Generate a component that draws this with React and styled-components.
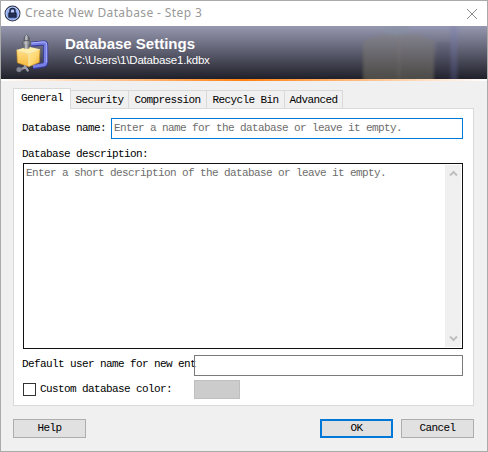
import React from 'react';
import styled, { createGlobalStyle } from 'styled-components';

const GlobalStyle = createGlobalStyle`
  * { box-sizing: border-box; }
  body { margin: 0; overflow: hidden; }
  button, input, textarea { font: inherit; letter-spacing: inherit; border-radius: 0; margin: 0; }
`;

const Window = styled.div`
  width: 488px;
  height: 452px;
  border: 1px solid #aaaaaa;
  background: #f0f0f0;
  display: flex;
  flex-direction: column;
  color: #000;
  font: 11px/14px "Liberation Mono", monospace;
  letter-spacing: -0.6px;
`;

const TitleBar = styled.header`
  height: 25px;
  flex: none;
  background: #fff;
  display: flex;
  align-items: center;
  padding: 0 9px 0 3px;
`;

const Title = styled.h1`
  flex: 1;
  margin: -2px 0 0 4px;
  font: 400 12px/20px "Noto Sans", sans-serif;
  letter-spacing: 0.38px;
  color: #999;
`;

const CloseButton = styled.button`
  width: 12px;
  height: 12px;
  padding: 0;
  border: 0;
  background: none;
  display: flex;
`;

const Banner = styled.section`
  height: 53px;
  flex: none;
  display: flex;
  overflow: hidden;
  background: linear-gradient(#9698b0, #20202a);
`;

const BannerIcon = styled.div`
  width: 64px;
  padding: 7px 0 0 13px;
`;

const BannerText = styled.div`
  flex: 1;
  color: #fff;
  font-family: "Liberation Sans", sans-serif;
  white-space: nowrap;
`;

const Heading = styled.h2`
  margin: 9px 0 0;
  font-size: 15px;
  line-height: 18px;
  font-weight: 700;
  letter-spacing: 0;
`;

const Path = styled.p`
  margin: 0 0 0 9px;
  font-size: 11.5px;
  line-height: 15px;
  letter-spacing: -0.2px;
`;

const Watermark = styled.div`
  width: 132px;
  height: 53px;
`;

const AccentLine = styled.div`
  height: 2px;
  flex: none;
  background: linear-gradient(90deg, #fff, #ff8010 50%, #fff);
`;

const Content = styled.main`
  flex: 1;
  padding: 7px 13px 0 12px;
`;

const TabList = styled.div`
  height: 20px;
  display: flex;
  align-items: flex-end;
`;

const Tab = styled.button`
  width: ${(p) => p.$width}px;
  height: ${(p) => (p.$active ? 21 : 18)}px;
  margin-bottom: ${(p) => (p.$active ? -1 : 0)}px;
  position: relative;
  padding: ${(p) => (p.$active ? '0 0 2px' : '1px 0 0')};
  border: 1px solid #d9d9d9;
  border-bottom: 0;
  border-left-width: ${(p) => (p.$active ? 1 : 0)}px;
  background: ${(p) => (p.$active ? '#fff' : '#f0f0f0')};
  color: #000;
  white-space: nowrap;
`;

const Panel = styled.section`
  height: 298px;
  border: 1px solid #d9d9d9;
  background: #fff;
  padding: 9px 10px 0 8px;
`;

const Row = styled.div`
  display: flex;
  align-items: center;
  height: ${(p) => p.$height}px;
  margin-top: ${(p) => p.$gap || 0}px;
`;

const Label = styled.label`
  width: ${(p) => p.$width}px;
  height: 14px;
  flex: none;
  margin-top: ${(p) => -(p.$lift || 0)}px;
  padding-left: ${(p) => p.$inset || 0}px;
  white-space: nowrap;
`;

const TextField = styled.input`
  flex: 1;
  min-width: 0;
  height: 21px;
  padding: 0 2px 1px;
  border: 1px solid ${(p) => (p.$focused ? '#0078d7' : '#7a7a7a')};
  background: ${(p) => (p.$focused ? '#fff' : 'transparent')};
  outline: none;
  &::placeholder { color: #6d6d6d; opacity: 1; }
`;

const DescriptionBox = styled.div`
  display: flex;
  height: 186px;
  margin: 2px 0 0 1px;
  border: 1px solid #111;
  padding: 1px;
`;

const DescriptionArea = styled.textarea`
  flex: 1;
  padding: 1px;
  border: 0;
  resize: none;
  outline: none;
  background: #fff;
  overflow: hidden;
  &::placeholder { color: #6d6d6d; opacity: 1; }
`;

const ScrollBar = styled.div`
  width: 16px;
  background: #f0f0f0;
  display: flex;
  flex-direction: column;
  justify-content: space-between;
`;

const ScrollButton = styled.button`
  width: 16px;
  height: 17px;
  padding: 0;
  border: 0;
  background: #f0f0f0;
  display: flex;
  align-items: center;
  justify-content: center;
`;

const CheckBox = styled.input`
  && { margin-left: 1px; }
  appearance: none;
  width: 13px;
  height: 13px;
  flex: none;
  border: 1px solid #333;
  background: #fff;
`;

const ColorButton = styled.button`
  width: 46px;
  height: 19px;
  padding: 0;
  border: 1px solid #bfbfbf;
  background: #ccc;
`;

const Footer = styled.footer`
  display: flex;
  gap: 8px;
  margin-top: 13px;
`;

const Button = styled.button`
  width: 73px;
  height: 19px;
  padding: 0 0 1px;
  border: ${(p) => (p.$primary ? '2px solid #0078d7' : '1px solid #adadad')};
  background: #e1e1e1;
  color: #000;
  line-height: 12px;
  &:first-child { margin-right: auto; }
`;

const LockIcon = () => (
  <svg width="17" height="17" viewBox="0 0 17 17">
    <defs>
      <radialGradient id="lockFill" cx=".5" cy=".4" r=".65">
        <stop offset="0" stopColor="#c2d2ff" />
        <stop offset=".6" stopColor="#88a6f0" />
        <stop offset="1" stopColor="#5677cc" />
      </radialGradient>
    </defs>
    <circle cx="8.5" cy="8.5" r="7.4" fill="url(#lockFill)" stroke="#2c3346" strokeWidth="1.1" />
    <circle cx="8.5" cy="8.5" r="6.5" fill="none" stroke="#d5e0ff" strokeWidth=".7" />
    <path d="M6 8V6a2.5 2.5 0 0 1 5 0v2" fill="none" stroke="#1c2746" strokeWidth="1.5" />
    <rect x="4.3" y="7.5" width="8.4" height="5.2" rx=".6" fill="#17213f" />
    <path d="M5.5 9.2h6M5.5 11h6" stroke="#40517c" strokeWidth=".6" />
  </svg>
);

const PackageIcon = () => (
  <svg width="40" height="42" viewBox="0 0 40 42">
    <defs>
      <linearGradient id="goldSide" x2="0" y2="1">
        <stop stopColor="#ffe08a" />
        <stop offset="1" stopColor="#f7b93c" />
      </linearGradient>
      <linearGradient id="goldFront" x2="1" y2="1">
        <stop stopColor="#ffe48e" />
        <stop offset=".5" stopColor="#ffd873" />
        <stop offset="1" stopColor="#efaa2c" />
      </linearGradient>
      <linearGradient id="steel">
        <stop stopColor="#56585d" />
        <stop offset=".4" stopColor="#c9ccd0" />
        <stop offset="1" stopColor="#515359" />
      </linearGradient>
    </defs>
    <path d="M17 11.2 29.5 10q2.2 0 2.2 2.2v17.6q0 2-2.2 2.3L19 34" fill="none" stroke="#34389a" strokeWidth="5" strokeLinejoin="round" />
    <path d="M17 11 29.5 9.8q2 0 2 2.2v17.6q0 2-2.2 2.3L19 33.5" fill="none" stroke="#7980e4" strokeWidth="3.2" />
    <path d="M17 10 30 8.8q2.8 0 2.8 2.8v18" fill="none" stroke="#b5baff" strokeWidth=".9" />
    <path d="M10 7.5q-.6-4.6 2.6-6 3.2 1.4 2.6 6z" fill="url(#steel)" stroke="#4c4e54" strokeWidth=".6" />
    <path d="M8.6 8.4q4-1.3 8 0l.3 3.2q-4.3 1.4-8.6 0z" fill="url(#steel)" stroke="#5c5e63" strokeWidth=".5" />
    <path d="M2.7 17 13.7 13.5 26 16.2 14.8 20.4z" fill="#ffefac" />
    <path d="m9.7 11.5h5.8v3.7q-2.9 1.2-5.8 0z" fill="url(#steel)" />
    <path d="M2.7 17 14.8 20.4v13.3L3.4 29.8z" fill="url(#goldSide)" />
    <path d="M14.8 20.4 26 16.2l-.7 13.3-10.5 4.2z" fill="url(#goldFront)" />
    <path d="M2.7 17 14.8 20.4 26 16.2M14.8 20.4v13" fill="none" stroke="#fff5c2" strokeWidth=".8" />
    <path d="m2.7 17 .7 12.8 11.4 3.9 10.5-4.2.7-13.3" fill="none" stroke="#c58a24" strokeWidth=".6" />
    <path d="m6 36.5 5.5-2.3M10.8 33.2l3 4.3" stroke="#9a9ca9" strokeWidth="2.2" strokeLinecap="round" />
    <circle cx="5" cy="36.5" r="2.6" fill="#858795" stroke="#5b5d6b" strokeWidth=".5" />
  </svg>
);

const WatermarkArt = () => (
  <svg width="132" height="53" viewBox="-10 0 132 53">
    <defs>
      <filter id="soften" filterUnits="userSpaceOnUse" x="-10" y="-20" width="142" height="110" colorInterpolationFilters="sRGB">
        <feGaussianBlur stdDeviation="1.6" />
      </filter>
      <linearGradient id="boxShade" x2="0" y2="1">
        <stop stopColor="#83807f" stopOpacity=".45" />
        <stop offset="1" stopColor="#6b6752" stopOpacity=".6" />
      </linearGradient>
    </defs>
    <g filter="url(#soften)">
      <path d="M72 16h14v52H72z" fill="#343350" opacity=".12" />
      <path d="M-2 15 17 8h35l17 7v53H-2z" fill="url(#boxShade)" />
      <path d="M34 14v54" stroke="#a38d86" strokeWidth="2" opacity=".15" />
      <path d="M18-10h27l-3 18-10 2-12-2z" fill="#8295a4" opacity=".3" />
      <path d="M42-10h42V3H46z" fill="#9294cc" opacity=".2" />
      <path d="M89-14v82" fill="none" stroke="#7476b8" strokeWidth="7" opacity=".27" />
    </g>
  </svg>
);

const Chevron = ({ down }) => (
  <svg width="9" height="7" viewBox="0 0 9 7">
    <path d={down ? 'm1 1.5 3.5 3.5L8 1.5' : 'm1 5.5L4.5 2 8 5.5'} fill="none" stroke="#bfbfbf" strokeWidth="2" />
  </svg>
);

const TABS = [
  ['General', 58], ['Security', 58], ['Compression', 78], ['Recycle Bin', 78], ['Advanced', 58],
];

export default function App() {
  return (
    <>
      <GlobalStyle />
      <Window>
        <TitleBar>
          <LockIcon />
          <Title>Create New Database - Step 3</Title>
          <CloseButton aria-label="Close">
            <svg width="12" height="12" viewBox="0 0 12 12">
              <path d="m1 1 10 10M11 1 1 11" stroke="#8b8b8b" strokeWidth="1" />
            </svg>
          </CloseButton>
        </TitleBar>
        <Banner>
          <BannerIcon><PackageIcon /></BannerIcon>
          <BannerText>
            <Heading>Database Settings</Heading>
            <Path>C:\Users\1\Database1.kdbx</Path>
          </BannerText>
          <Watermark><WatermarkArt /></Watermark>
        </Banner>
        <AccentLine />
        <Content>
          <TabList role="tablist">
            {TABS.map(([name, width], i) => (
              <Tab key={name} role="tab" $width={width} $active={i === 0}>{name}</Tab>
            ))}
          </TabList>
          <Panel>
            <Row $height={21}>
              <Label $width={89} $lift={2}>Database name:</Label>
              <TextField $focused placeholder="Enter a name for the database or leave it empty." />
            </Row>
            <Row $height={14} $gap={8}><Label $width={200}>Database description:</Label></Row>
            <DescriptionBox>
              <DescriptionArea placeholder="Enter a short description of the database or leave it empty." />
              <ScrollBar>
                <ScrollButton aria-label="Scroll up"><Chevron /></ScrollButton>
                <ScrollButton aria-label="Scroll down"><Chevron down /></ScrollButton>
              </ScrollBar>
            </DescriptionBox>
            <Row $height={21} $gap={6}>
              <Label $width={172} $lift={4}>Default user name for new ent</Label>
              <TextField />
            </Row>
            <Row $height={19} $gap={4}>
              <CheckBox type="checkbox" aria-label="Custom database color" />
              <Label $width={158} $inset={4} $lift={1}>Custom database color:</Label>
              <ColorButton aria-label="Choose color" />
            </Row>
          </Panel>
          <Footer>
            <Button>Help</Button>
            <Button $primary>OK</Button>
            <Button>Cancel</Button>
          </Footer>
        </Content>
      </Window>
    </>
  );
}
